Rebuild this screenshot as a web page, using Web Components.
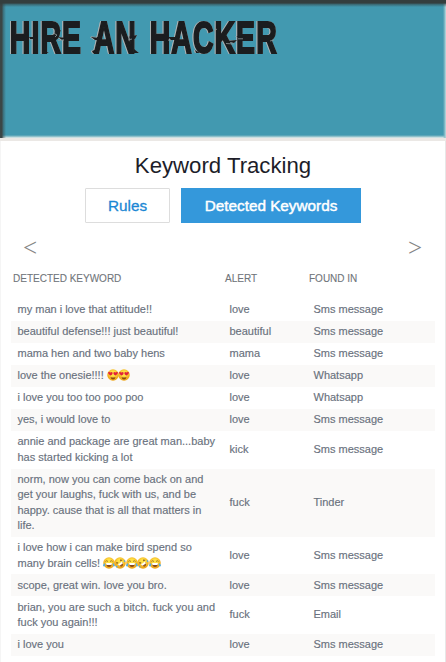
<!DOCTYPE html>
<html lang="en"><head><meta charset="utf-8"><title>Keyword Tracking</title>
<style>
html,body{margin:0;width:446px;height:662px;overflow:hidden;background:#fff;font-family:"Liberation Sans",Arial,sans-serif}
</style></head><body><keyword-page></keyword-page>
<script>
const define=(name,html)=>customElements.define(name,class extends HTMLElement{
  constructor(){super();this.attachShadow({mode:'open'}).innerHTML=html;}
});

define('brand-banner',`<style>
:host{display:block;box-sizing:border-box;height:141px;border-bottom:3px solid #ebe8e5;
background:linear-gradient(to bottom,#343e3e 0,#343e3e 3px,rgba(52,62,62,.5) 4.5px,transparent 7px),
linear-gradient(to right,#3b4646 0,#3b4646 2px,rgba(52,62,62,.5) 3px,transparent 6px),
linear-gradient(to left,#c3dfe3 0,#8fc0ca 1px,transparent 3px),
linear-gradient(to top,#e8f1f1 0,#a9cdd2 1px,transparent 3px),#4299b0}
svg{display:block;width:300px;height:70px}
g{filter:drop-shadow(-.5px 0 .2px #a9b1b3) drop-shadow(.4px .4px .2px #a9b1b3)}
text{font:bold 45px "Liberation Sans",Arial,sans-serif;letter-spacing:1.7px;word-spacing:6px;fill:#1b1d1f;stroke:#1b1d1f;stroke-width:2;stroke-linejoin:miter}
</style><svg viewBox="0 0 300 70"><g>
<text transform="translate(9.8 52.5) scale(.632 1)">HIRE AN HACKER</text>
<path fill="#1b1d1f" d="M29 37h7v2h-6zM56 32l5-2-2 4zM58 37l8 1-4 2zM91 37h8l2 3h-6zM128 37l9-2-2 4zM168 37h7l2 3h-6zM236 36l10 1-4 2zM226 41l11-1-3 3zM92 51l5-2v4h-4zM134 49l5 4h-5zM271 49l5 4h-5zM43 50l6 3h-6zM195 50l5 3-4 0z"/>
</g>
<path fill="none" stroke="#8f999c" stroke-width=".8" d="M29 39.500l4 .5M53 33l4 2-2 2M58 40.500l6-.5M91 36.500l6 1M128 40l4-1M168 40l4 1M226 43.500l8 .5M238 38.800l5 0M270 41l4-1M214 31l3-2"/>
</svg>`);

define('tab-button',`<style>
:host{display:flex;box-sizing:border-box;height:35px;width:85px;align-items:center;justify-content:center;border:1px solid #ddd;border-radius:1px;color:#1b87d4;font-size:15.3px;-webkit-text-stroke:.3px currentColor;white-space:nowrap}
:host([active]){width:180px;background:#3498db;border-color:#3498db;color:#fff;border-radius:0;-webkit-text-stroke-width:.45px}
</style><slot></slot>`);

define('emoji-face',`<style>
:host{display:inline-block;width:11.4px;height:12px;vertical-align:-2px}
svg{display:block;overflow:visible;width:12px;height:12px}
g{display:none}:host([kind=hearts]) .h,:host([kind=joy]) .j,:host([kind=rofl]) .r{display:block}
</style><svg viewBox="0 0 24 24"><defs><radialGradient id="y" cy=".38"><stop offset=".4" stop-color="#ffe143"/><stop offset="1" stop-color="#f0a81c"/></radialGradient></defs>
<circle cx="12" cy="12" r="11.500" fill="url(#y)"/>
<g class="h"><path fill="#e2203b" d="M7 13C2 10 1 6 4 6q2 0 3 1 2-2 4 0c1 2-1 5-4 6zM17 13c-3-1-5-4-4-6q2-2 4 0 1-1 3-1c3 0 2 4-3 7z"/><path fill="#8a4715" d="M7 16q5 2 10 0-1 5-5 5t-5-5"/></g>
<g class="j"><path fill="none" stroke="#8a5a1a" stroke-width="1.500" d="M5 9q2-3 5 0M14 9q3-3 5 0"/><path fill="#8a4715" d="M6 13h12q-1 7-6 7t-6-7"/><path fill="#fff" d="M6 12h12l-1 4H7z"/><path fill="#55aede" d="M4 12q-4 2-4 5 1 3 4 1 1-2 0-6M20 12q4 2 4 5-1 3-4 1-1-2 0-6"/></g>
<g class="r" transform="rotate(-35 12 12)"><path fill="none" stroke="#8a5a1a" stroke-width="1.500" d="M6 7l3 2-4 1M18 7l-3 2 4 1"/><path fill="#9a571a" d="M7 13h10q-1 7-5 7t-5-7"/><path fill="#fff" d="M7 12h10l-1 4H8z"/><path fill="#55aede" d="M3 12q-3 1-2 3 2 2 3 0zM21 12q3 1 2 3-2 2-3 0z"/></g></svg>`);

define('keyword-row',`<style>
:host{display:grid;box-sizing:border-box;grid-template-columns:212px 84px 1fr;height:var(--h,22.1px);align-items:center;padding-left:6.5px;font-size:11px;line-height:15.4px;color:#69717d;white-space:nowrap;-webkit-text-stroke:.15px currentColor}
:host(:nth-child(even)){background:#faf9f8}
</style><div><slot name="message"></slot></div><div><slot name="alert"></slot></div><div><slot></slot></div>`);

define('keyword-page',`<style>
:host{display:block;box-sizing:border-box;width:446px;height:662px;background:#fff;overflow:hidden}
main{box-sizing:border-box;height:521px;border-left:1px solid #f5f5f5;border-right:1px solid #e7e7e7;overflow:hidden}
h1{margin:0;padding-top:11px;height:36px;text-align:center;font-size:22.2px;line-height:28px;font-weight:400;color:#1d1d29}
.tabs{display:flex;gap:11px;padding-left:84px}
nav{display:flex;justify-content:space-between;padding:12px 23px 0 22px;height:38px;box-sizing:border-box;font:25px/25px "Liberation Serif",serif;color:#858585}
.heads{display:grid;grid-template-columns:212px 84px 1fr;padding:11px 0 0 12px;height:37.5px;box-sizing:border-box;font-size:10px;line-height:14px;color:#70757a;-webkit-text-stroke:.1px currentColor}
.rows{padding:0 10px}
</style><brand-banner></brand-banner><main><h1>Keyword Tracking</h1>
<div class="tabs"><tab-button>Rules</tab-button><tab-button active>Detected Keywords</tab-button></div>
<nav><span>&lt;</span><span>&gt;</span></nav>
<div class="heads"><span>DETECTED KEYWORD</span><span>ALERT</span><span>FOUND IN</span></div>
<div class="rows"></div></main>`);

const face=k=>`<emoji-face kind="${k}"></emoji-face>`;
const rows=[
['my man i love that attitude!!','love','Sms message'],
['beautiful defense!!! just beautiful!','beautiful','Sms message'],
['mama hen and two baby hens','mama','Sms message'],
['love the onesie!!!! '+face('hearts')+face('hearts'),'love','Whatsapp'],
['i love you too too poo poo','love','Whatsapp'],
['yes, i would love to','love','Sms message'],
['annie and package are great man...baby<br>has started kicking a lot','kick','Sms message',37.5],
['norm, now you can come back on and<br>get your laughs, fuck with us, and be<br>happy. cause that is all that matters in<br>life.','fuck','Tinder',68.2],
['i love how i can make bird spend so<br>many brain cells! '+['joy','rofl','joy','rofl','joy'].map(face).join(''),'love','Sms message',37.6],
['scope, great win. love you bro.','love','Sms message'],
['brian, you are such a bitch. fuck you and<br>fuck you again!!!','fuck','Email',37.5],
['i love you','love','Sms message']];
document.querySelector('keyword-page').shadowRoot.querySelector('.rows').innerHTML=rows.map(([m,a,f,h])=>
`<keyword-row${h?` style="--h:${h}px"`:''}><span slot="message">${m}</span><span slot="alert">${a}</span>${f}</keyword-row>`).join('');
</script></body></html>
